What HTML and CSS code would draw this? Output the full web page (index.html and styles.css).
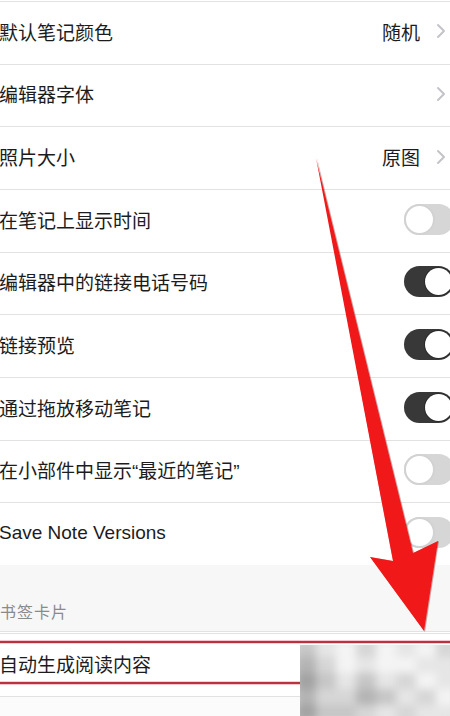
FILE: index.html
```html
<!DOCTYPE html>
<html lang="zh-CN">
<head>
<meta charset="utf-8">
<title>设置</title>
<link rel="stylesheet" href="styles.css">
</head>
<body>
<div class="page">
  <div class="list">
    <div class="row"><span class="label">默认笔记颜色</span><span class="value">随机</span><svg class="chev" viewBox="0 0 10 16"><polyline points="2,2 8,8 2,14"/></svg></div>
    <div class="row"><span class="label">编辑器字体</span><svg class="chev" viewBox="0 0 10 16"><polyline points="2,2 8,8 2,14"/></svg></div>
    <div class="row"><span class="label">照片大小</span><span class="value">原图</span><svg class="chev" viewBox="0 0 10 16"><polyline points="2,2 8,8 2,14"/></svg></div>
    <div class="row"><span class="label">在笔记上显示时间</span><span class="toggle off"><span class="knob"></span></span></div>
    <div class="row"><span class="label">编辑器中的链接电话号码</span><span class="toggle on"><span class="knob"></span></span></div>
    <div class="row"><span class="label">链接预览</span><span class="toggle on"><span class="knob"></span></span></div>
    <div class="row"><span class="label">通过拖放移动笔记</span><span class="toggle on"><span class="knob"></span></span></div>
    <div class="row"><span class="label">在小部件中显示“最近的笔记”</span><span class="toggle off"><span class="knob"></span></span></div>
    <div class="row"><span class="label latin">Save Note Versions</span><span class="toggle off"><span class="knob"></span></span></div>
  </div>
  <div class="section-header"><span>书签卡片</span></div>
  <div class="list">
    <div class="row bookmark"><span class="label">自动生成阅读内容</span></div>
    <div class="row tail"></div>
  </div>

  <div class="annot-box"></div>
  <div class="mosaic">
    <div class="mosaic-grid">
      <i class="g4"></i><i class="g2"></i><i class="g1"></i><i class="g3"></i><i class="g1"></i><i class="g2"></i><i class="g1"></i><i class="g3"></i>
      <i class="g5"></i><i class="g3"></i><i class="g1"></i><i class="g2"></i><i class="g1"></i><i class="g1"></i><i class="g2"></i><i class="g2"></i>
      <i class="g6"></i><i class="g4"></i><i class="g2"></i><i class="g4"></i><i class="g2"></i><i class="g3"></i><i class="g1"></i><i class="g2"></i>
      <i class="g5"></i><i class="g3"></i><i class="g3"></i><i class="g5"></i><i class="g4"></i><i class="g2"></i><i class="g3"></i><i class="g1"></i>
      <i class="g6"></i><i class="g4"></i><i class="g4"></i><i class="g3"></i><i class="g2"></i><i class="g3"></i><i class="g2"></i><i class="g2"></i>
    </div>
  </div>
  <svg class="arrow" viewBox="0 0 450 716" width="450" height="716">
    <polygon class="arrow-shadow" points="317,158 414,553 439,541 425,632 370,557 393,561"/>
    <polygon class="arrow-fill" points="316,158 413,553 438,541 424,631 370,557 393,561"/>
  </svg>
</div>
</body>
</html>
```

FILE: styles.css
```css
html, body {
  margin: 0;
  padding: 0;
  background: #ffffff;
}

body {
  font-family: "Liberation Sans", "Noto Sans CJK SC", sans-serif;
  color: #1e1e1e;
}

.page {
  position: relative;
  width: 450px;
  height: 716px;
  overflow: hidden;
  background: #ffffff;
}

.list {
  margin-top: 1px;
  border-top: 1px solid #e2e2e2;
  background: #ffffff;
}

.row {
  display: flex;
  align-items: center;
  box-sizing: border-box;
  height: 62.67px;
  border-bottom: 1px solid #e2e2e2;
  padding: 0 4px 3px 0;
}

.label {
  flex: 1;
  font-size: 19px;
  margin-left: -1px;
  white-space: nowrap;
  color: #1c1c1c;
}

.value {
  font-size: 19px;
  color: #1c1c1c;
  margin-right: 16px;
}

.chev {
  width: 10px;
  height: 16px;
  fill: none;
  stroke: #c4c4c8;
  stroke-width: 2;
  stroke-linecap: round;
  stroke-linejoin: round;
}

.toggle {
  position: relative;
  box-sizing: border-box;
  width: 50px;
  height: 31px;
  border-radius: 16px;
  margin-right: -8px;
  flex: none;
}

.toggle.off {
  background: #d6d6d6;
}

.toggle.on {
  background: #383838;
}

.knob {
  position: absolute;
  top: 2px;
  width: 27px;
  height: 27px;
  box-sizing: border-box;
  border-radius: 50%;
  background: #ffffff;
}

.toggle.off .knob {
  left: 0;
  top: 0;
  width: 31px;
  height: 31px;
  border: 2px solid #d2d2d2;
}

.toggle.on .knob {
  right: 2px;
  box-shadow: 0 0 0 1px rgba(0, 0, 0, 0.25);
}

.section-header {
  box-sizing: border-box;
  height: 67px;
  margin-top: -1px;
  background: #f7f7f7;
  border-bottom: 1px solid #e2e2e2;
  display: flex;
  align-items: flex-end;
  padding-bottom: 8px;
}

.section-header span {
  font-size: 16px;
  color: #8a8a8a;
  margin-left: 0;
  letter-spacing: 1px;
}

.section-header + .list {
  margin-top: 1px;
  border-top: 1px solid #e2e2e2;
}

.row.bookmark {
  height: 63px;
}

.row.tail {
  height: 40px;
  background: #fbfbfb;
}

.annot-box {
  position: absolute;
  left: -4px;
  top: 641px;
  width: 458px;
  height: 43px;
  box-sizing: border-box;
  border: 2px solid #b8333f;
  box-shadow: 0 0 0 1px rgba(240, 150, 160, 0.55), inset 0 0 0 1px rgba(240, 150, 160, 0.45);
}

.mosaic {
  position: absolute;
  left: 300px;
  top: 645px;
  width: 150px;
  height: 71px;
  overflow: hidden;
  background: #dcdcdc;
}

.mosaic-grid {
  display: grid;
  grid-template-columns: repeat(8, 1fr);
  grid-template-rows: repeat(5, 1fr);
  width: 160px;
  height: 80px;
  margin: -4px 0 0 -4px;
  filter: blur(4px);
}

.mosaic-grid i {
  display: block;
}

.g1 { background: #f4f4f4; }
.g2 { background: #e6e6e6; }
.g3 { background: #d6d6d6; }
.g4 { background: #c6c6c6; }
.g5 { background: #b4b4b4; }
.g6 { background: #a2a2a2; }

.arrow {
  position: absolute;
  left: 0;
  top: 0;
  pointer-events: none;
}

.arrow-shadow {
  fill: rgba(120, 0, 0, 0.35);
}

.arrow-fill {
  fill: #f01818;
}
```
